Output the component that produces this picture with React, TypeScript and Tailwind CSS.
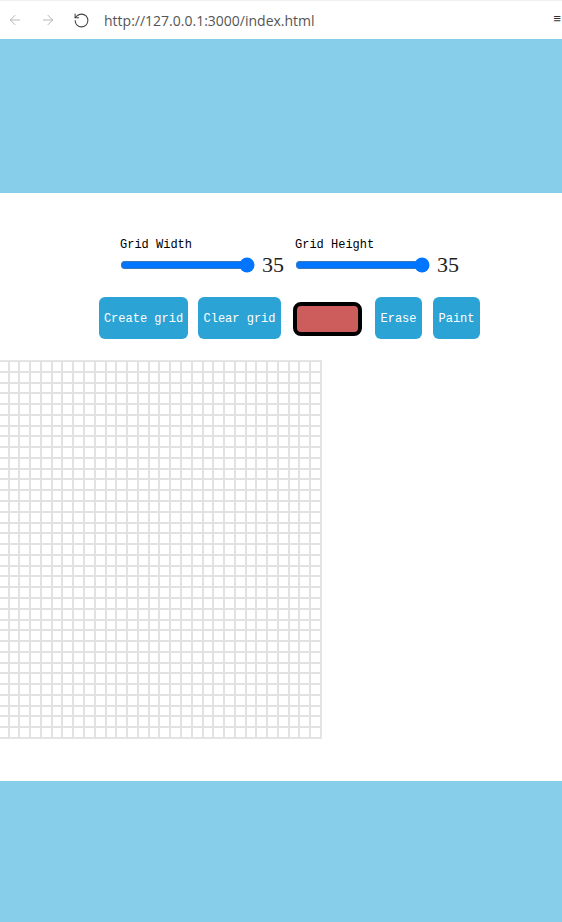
import { ArrowLeft, ArrowRight, RotateCw } from 'lucide-react';

const SIZE = 35;

function BrowserBar() {
  return (
    <div className="h-[39px] bg-white flex items-center relative border-t border-[#f0f0f0]">
      <ArrowLeft className="ml-[7px] text-[#b8b8b8]" size={16} strokeWidth={1.5} />
      <ArrowRight className="ml-[17px] text-[#b8b8b8]" size={16} strokeWidth={1.5} />
      <RotateCw className="ml-[17px] text-[#444] -scale-x-100" size={17} strokeWidth={1.5} />
      <span
        className="ml-[14px] text-[14px] text-[#555]"
        style={{ fontFamily: '"Open Sans", "Liberation Sans", sans-serif' }}
      >
        http://127.0.0.1:3000/index.html
      </span>
      <span className="absolute right-[1px] top-[9px] text-[13px] text-[#333]">≡</span>
    </div>
  );
}

function SliderGroup({ label }: { label: string }) {
  return (
    <div className="flex flex-col">
      <span className="text-[12px] leading-[14px] text-black pt-[2px] h-[18px]">{label}</span>
      <div className="flex items-center h-[22px]">
        <input
          type="range"
          min={1}
          max={35}
          defaultValue={35}
          className="w-[135px] m-0 accent-[#0075ff]"
        />
        <span
          className="ml-[7px] text-[22px] leading-[22px] text-[#222]"
          style={{ fontFamily: '"Liberation Serif", serif' }}
        >
          35
        </span>
      </div>
    </div>
  );
}

function Btn({ label, w }: { label: string; w: string }) {
  return (
    <button className={`${w} h-[42px] pt-[2px] rounded-[6px] bg-[#2ba3d4] text-white text-[12px]`}>
      {label}
    </button>
  );
}

export default function App() {
  const cells = Array.from({ length: SIZE * SIZE });
  return (
    <div
      className="w-[562px] h-[922px] overflow-hidden bg-white flex flex-col"
      style={{ fontFamily: '"Liberation Mono", monospace' }}
    >
      <BrowserBar />
      <header className="h-[154px] bg-[#87ceeb]" />
      <main className="h-[588px] flex flex-col pt-[43px]">
        <div className="flex pl-[120px] gap-[11px]">
          <SliderGroup label="Grid Width" />
          <SliderGroup label="Grid Height" />
        </div>
        <div className="flex items-center pl-[99px] mt-[21px]">
          <Btn label="Create grid" w="w-[89px]" />
          <div className="ml-[10px]">
            <Btn label="Clear grid" w="w-[83px]" />
          </div>
          <div className="ml-[12px] mt-[1px] w-[69px] h-[34px] rounded-[8px] border-[4px] border-black bg-[#cd5c5c]" />
          <div className="ml-[13px]">
            <Btn label="Erase" w="w-[47px]" />
          </div>
          <div className="ml-[11px]">
            <Btn label="Paint" w="w-[47px]" />
          </div>
        </div>
        <div className="mt-[21px] ml-[-57px] w-[379px] h-[379px] grid grid-cols-[repeat(35,1fr)] grid-rows-[repeat(35,1fr)] border border-[#e6e6e6]">
          {cells.map((_, i) => (
            <div key={i} className="border border-[#e2e2e2] bg-white" />
          ))}
        </div>
      </main>
      <footer className="flex-1 bg-[#87ceeb]" />
    </div>
  );
}
